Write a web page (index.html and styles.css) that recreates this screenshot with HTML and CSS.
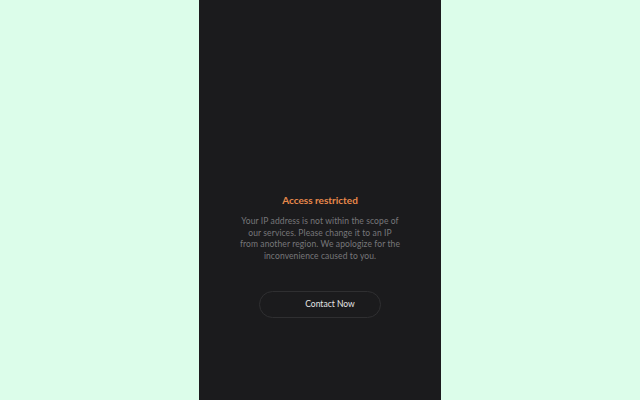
FILE: index.html
```html
<!DOCTYPE html>
<html lang="en">
<head>
  <meta charset="UTF-8" />
  <meta name="viewport" content="width=device-width, initial-scale=1.0"/>
  <title>Access restricted</title>
  <link rel="stylesheet" href="styles.css">
</head>
<body>
  <div class="screen">
    <div class="notice">
      <h2 class="title">Access restricted</h2>
      <p class="message">Your IP address is not within the scope of our services. Please change it to an IP from another region. We apologize for the inconvenience caused to you.</p>
      <button class="contact-btn">Contact Now</button>
    </div>
  </div>
</body>
</html>
```

FILE: styles.css
```css
body {
  margin: 0;
  font-family: Lato, 'Noto Sans', sans-serif;
  background: #dcfdea;
  display: flex;
  justify-content: center;
  height: 100vh;
}

.screen {
  width: 242px;
  height: 400px;
  background: #1b1b1d;
}

.notice {
  display: flex;
  flex-direction: column;
  align-items: center;
  padding-top: 194px;
}

.title {
  margin: 0;
  font-size: 10px;
  font-weight: bold;
  color: #e8894b;
  line-height: 13px;
}

.message {
  margin: 9px 0 0;
  width: 162px;
  font-size: 8.5px;
  letter-spacing: 0.1px;
  line-height: 11.7px;
  color: #77777a;
  text-align: center;
}

.contact-btn {
  margin-top: 28px;
  width: 122px;
  height: 27px;
  border: 1px solid #2f2f31;
  border-radius: 14px;
  background: transparent;
  color: #e6e6e6;
  font-family: inherit;
  font-size: 8.5px;
  padding: 0 0 0 20px;
}
```
